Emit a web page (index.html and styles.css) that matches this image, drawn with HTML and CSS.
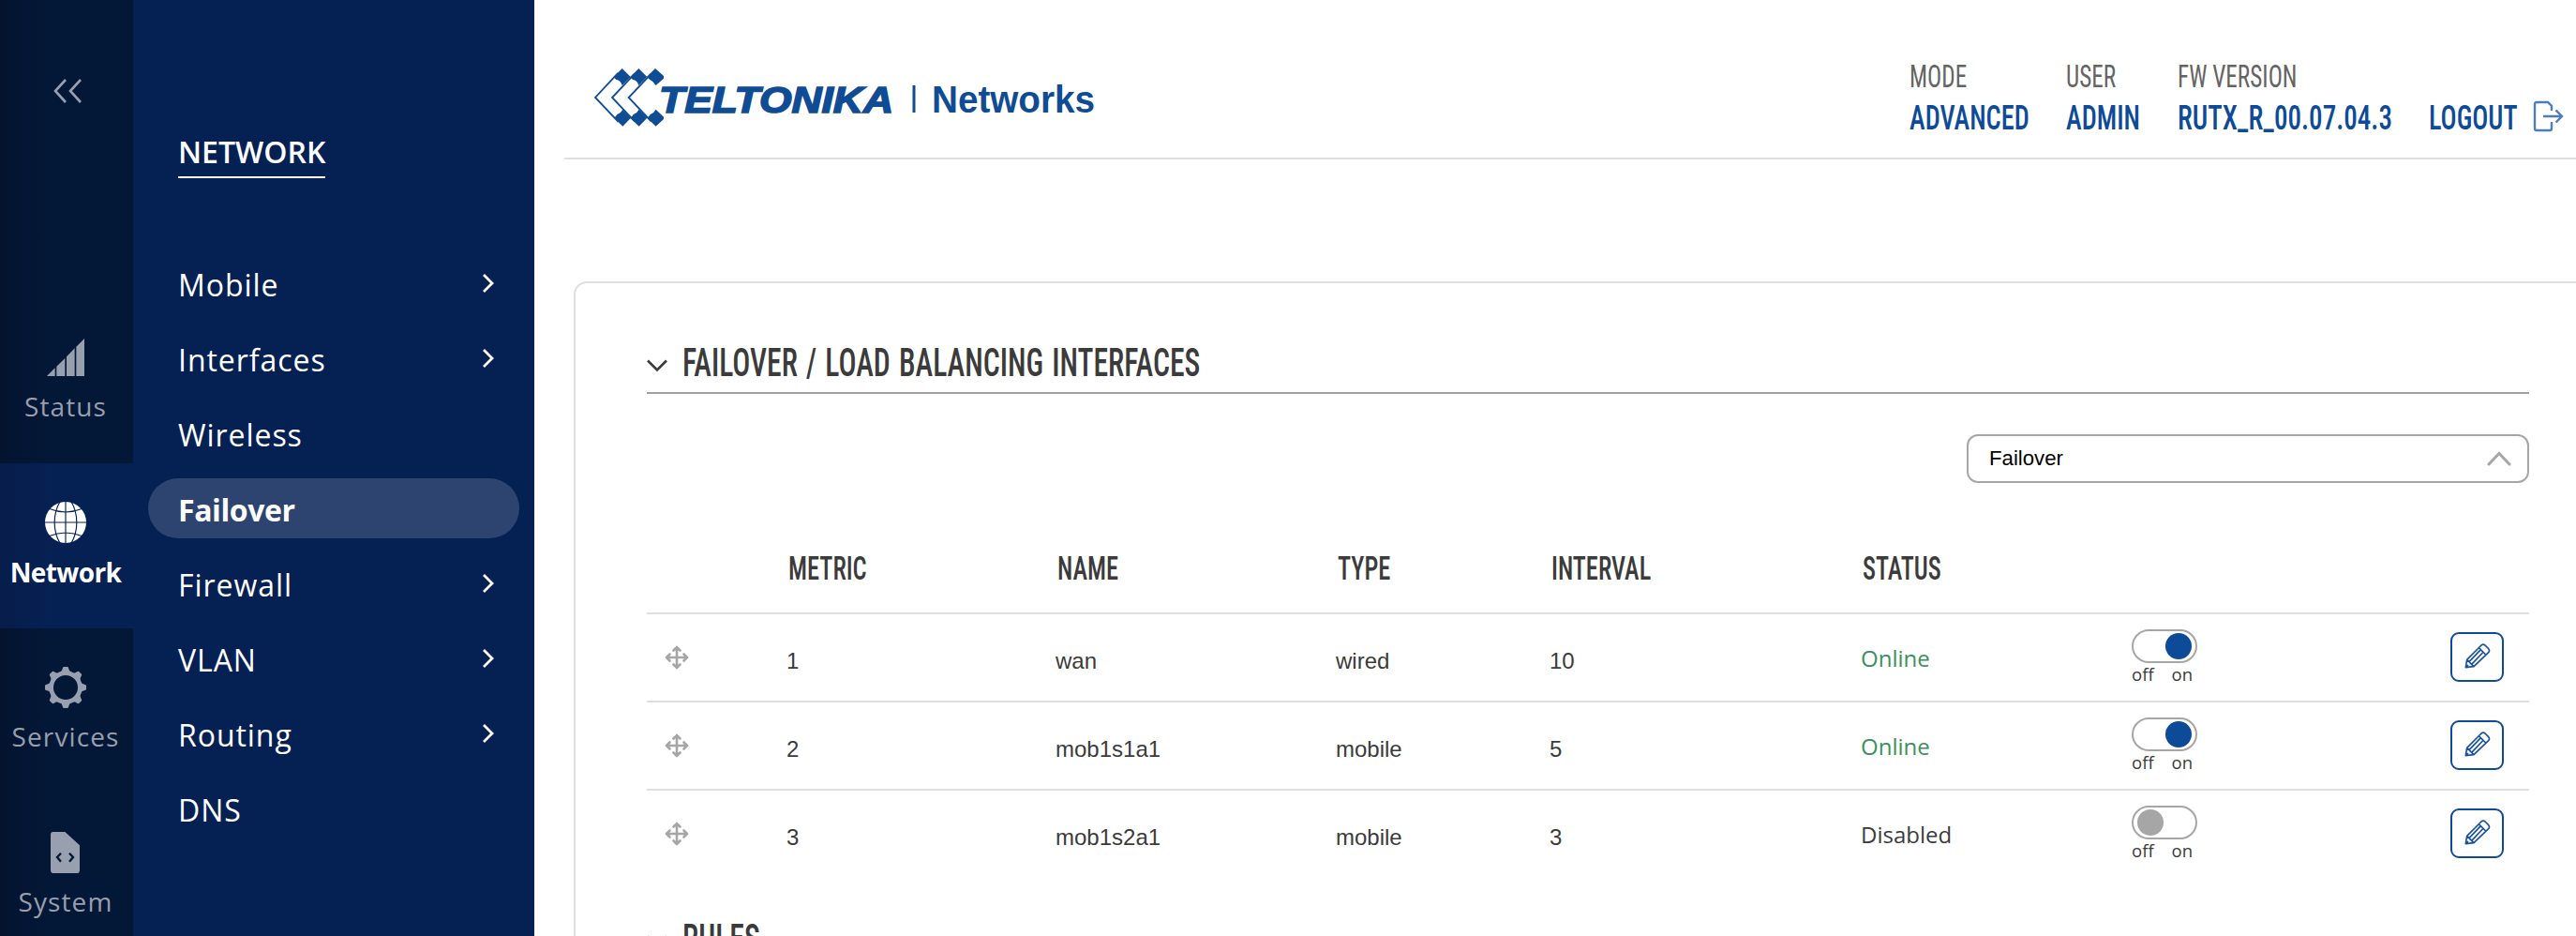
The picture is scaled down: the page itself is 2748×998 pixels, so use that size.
FILE: index.html
```html
<!DOCTYPE html>
<html lang="en">
<head>
    <meta charset="UTF-8">
    <meta name="viewport" content="width=device-width, initial-scale=1.0">
    <title>Failover - Teltonika Networks</title>
    <link rel="stylesheet" href="styles.css">
</head>
<body>
    <!-- shared icons -->
    <svg class="defs" width="0" height="0">
        <symbol id="chev-right" viewBox="0 0 14 22">
            <path d="M2 2l9 9-9 9" fill="none" stroke="#fff" stroke-width="2.8"/>
        </symbol>
        <symbol id="move" viewBox="0 0 26 26">
            <path d="M13 2v22M2 13h22M9.500 5.500L13 2l3.500 3.500M9.500 20.500l3.500 3.500 3.500-3.500M5.500 9.500L2 13l3.500 3.500M20.500 9.500l3.500 3.500-3.500 3.500" fill="none" stroke="#a6a6a6" stroke-width="2.600" stroke-linecap="round"/>
        </symbol>
        <symbol id="pencil" viewBox="0 0 84 84">
            <path d="M4 80L8 55 54 9q6-5 12 0l11 11q5 6 0 12L30 77zM8 55l22 22M15 62L53 22M23 70L61 30M46 17l22 22M4 80l8-8" fill="none" stroke="#1a529d" stroke-width="5" stroke-linejoin="round"/>
        </symbol>
    </svg>

    <div class="layout">
        <div class="rail">
            <div class="collapse">
                <svg width="32" height="28" viewBox="0 0 32 28"><path d="M14 2L3 14l11 12M30 2L19 14l11 12" fill="none" stroke="#989fae" stroke-width="2.600"/></svg>
            </div>
            <div class="rail_item">
                <svg width="44" height="44" viewBox="0 0 132 132"><path d="M6 126l26-26v26zM37 95l27-26v57H37zM69 64l26-27v89H69zM100 32l26-26v120h-26z" fill="#98a0b0"/></svg>
                <span>Status</span>
            </div>
            <div class="rail_item active">
                <svg width="44" height="44" viewBox="0 0 132 132">
                    <circle cx="66" cy="66" r="66" fill="#fff"/>
                    <path d="M66 0v132M0 66h132M50 -4C24 38 24 94 50 136M82 -4C108 38 108 94 82 136M12 22Q66 44 120 22M12 110Q66 88 120 110" fill="none" stroke="#052153" stroke-width="3.500"/>
                </svg>
                <span>Network</span>
            </div>
            <div class="rail_item">
                <svg width="44" height="44" viewBox="-66 -66 132 132">
                    <circle r="46" fill="none" stroke="#98a0b0" stroke-width="14"/>
                    <g fill="#98a0b0">
                        <path id="tooth" d="M-18-48Q-11-52-10-60q1-6 4-6H6q3 0 4 6 1 8 8 12z"/>
                        <use href="#tooth" transform="rotate(45)"/>
                        <use href="#tooth" transform="rotate(90)"/>
                        <use href="#tooth" transform="rotate(135)"/>
                        <use href="#tooth" transform="rotate(180)"/>
                        <use href="#tooth" transform="rotate(225)"/>
                        <use href="#tooth" transform="rotate(270)"/>
                        <use href="#tooth" transform="rotate(315)"/>
                    </g>
                </svg>
                <span>Services</span>
            </div>
            <div class="rail_item">
                <svg width="44" height="44" viewBox="0 0 132 132">
                    <path d="M26 0h38l47 43v79q0 10-10 10H28q-10 0-10-10V8q0-8 8-8z" fill="#98a0b0"/>
                    <path d="M51 68L39 81l12 14M78 68l12 13-12 14" fill="none" stroke="#031736" stroke-width="7"/>
                </svg>
                <span>System</span>
            </div>
        </div>

        <div class="menu">
            <div class="menu_title">NETWORK</div>
            <div class="menu_item"><span>Mobile</span><svg width="14" height="22"><use href="#chev-right"/></svg></div>
            <div class="menu_item"><span>Interfaces</span><svg width="14" height="22"><use href="#chev-right"/></svg></div>
            <div class="menu_item"><span>Wireless</span></div>
            <div class="menu_item selected"><span>Failover</span></div>
            <div class="menu_item"><span>Firewall</span><svg width="14" height="22"><use href="#chev-right"/></svg></div>
            <div class="menu_item"><span>VLAN</span><svg width="14" height="22"><use href="#chev-right"/></svg></div>
            <div class="menu_item"><span>Routing</span><svg width="14" height="22"><use href="#chev-right"/></svg></div>
            <div class="menu_item"><span>DNS</span></div>
        </div>

        <div class="main">
            <div class="header">
                <svg class="logo" width="560" height="80" viewBox="0 0 560 80" fill="#104c94">
                    <g transform="scale(.3333)">
                        <path d="M113 27l27 27-27 27q-4-16-20-19l-7-8zM166 27l27 27-27 27q-4-16-20-19l-7-8zM219 27l27 24v8l-25 22q-6-12-20-19l-9-8z"/>
                        <path d="M115 158l26 27-26 27-28-27q8-6 10-11 12-4 18-16zM167 158l26 27-26 27-28-27q8-6 10-11 12-4 18-16zM221 158l25 24v7l-25 23-28-27q8-6 10-11 12-4 18-16z"/>
                        <path d="M100 42L27 120l74 78M153 44L81 120l72 76M206 44L134 120l72 76" fill="none" stroke="#104c94" stroke-width="5.500"/>
                    </g>
                    <text class="brand" x="77" y="55.500" textLength="250" lengthAdjust="spacingAndGlyphs">TELTONIKA</text>
                    <rect x="347.500" y="27" width="3" height="29"/>
                    <text class="brand_sub" x="368" y="56" textLength="174" lengthAdjust="spacingAndGlyphs">Networks</text>
                </svg>
                <div class="stats">
                    <div class="stat"><label><span>MODE</span></label><b><span>ADVANCED</span></b></div>
                    <div class="stat"><label><span>USER</span></label><b><span>ADMIN</span></b></div>
                    <div class="stat"><label><span>FW VERSION</span></label><b><span class="fw">RUTX_R_00.07.04.3</span></b></div>
                    <div class="stat logout">
                        <b><span>LOGOUT</span></b>
                        <svg width="34" height="34" viewBox="0 0 34 34" fill="none" stroke="#4f7db6" stroke-width="2.400"><path d="M20 11V6l-4-4H4q-2 0-2 2v26q0 2 2 2h14q2 0 2-2v-7M11 17h20M24.500 10.500l6.500 6.500-6.500 6.500"/></svg>
                    </div>
                </div>
            </div>

            <div class="panel">
                <h2 class="section_title">
                    <svg width="22" height="14" viewBox="0 0 22 14"><path d="M1 1.500l10 10 10-10" fill="none" stroke="#3b3b3b" stroke-width="2.600"/></svg>
                    <span>FAILOVER / LOAD BALANCING INTERFACES</span>
                </h2>
                <div class="select">
                    <span>Failover</span>
                    <svg width="26" height="16" viewBox="0 0 26 16"><path d="M2 14L13 2.500 24 14" fill="none" stroke="#a6a6a6" stroke-width="3" stroke-linecap="round"/></svg>
                </div>

                <div class="row head">
                    <i></i>
                    <div><span>METRIC</span></div>
                    <div><span>NAME</span></div>
                    <div><span>TYPE</span></div>
                    <div><span>INTERVAL</span></div>
                    <div><span>STATUS</span></div>
                </div>
                <div class="row">
                    <svg class="move" width="26" height="26"><use href="#move"/></svg>
                    <div>1</div>
                    <div>wan</div>
                    <div>wired</div>
                    <div>10</div>
                    <div class="status online">Online</div>
                    <div class="switch on"><div class="track"><i></i></div><p><span>off</span><span>on</span></p></div>
                    <div class="edit"><svg width="28" height="28"><use href="#pencil"/></svg></div>
                </div>
                <div class="row">
                    <svg class="move" width="26" height="26"><use href="#move"/></svg>
                    <div>2</div>
                    <div>mob1s1a1</div>
                    <div>mobile</div>
                    <div>5</div>
                    <div class="status online">Online</div>
                    <div class="switch on"><div class="track"><i></i></div><p><span>off</span><span>on</span></p></div>
                    <div class="edit"><svg width="28" height="28"><use href="#pencil"/></svg></div>
                </div>
                <div class="row last">
                    <svg class="move" width="26" height="26"><use href="#move"/></svg>
                    <div>3</div>
                    <div>mob1s2a1</div>
                    <div>mobile</div>
                    <div>3</div>
                    <div class="status">Disabled</div>
                    <div class="switch"><div class="track"><i></i></div><p><span>off</span><span>on</span></p></div>
                    <div class="edit"><svg width="28" height="28"><use href="#pencil"/></svg></div>
                </div>

                <h2 class="section_title">
                    <svg width="22" height="14" viewBox="0 0 22 14"><path d="M1 1.500l10 10 10-10" fill="none" stroke="#3b3b3b" stroke-width="2.600"/></svg>
                    <span>RULES</span>
                </h2>
            </div>
        </div>
    </div>
</body>
</html>
```
FILE: styles.css
```css
* {
    box-sizing: border-box;
}
body {
    margin: 0;
    height: 998px;
    overflow: hidden;
    background: #fff;
    font-family: "Liberation Sans", Arial, sans-serif;
    color: #3b3b3b;
}
svg {
    display: block;
    flex: none;
}
.defs {
    position: absolute;
}
.layout {
    display: flex;
    height: 998px;
    overflow: hidden;
}

/* left icon rail */
.rail {
    flex: none;
    width: 142px;
    background: linear-gradient(to right, #04142f, #031736 50px);
    font-family: "Open Sans", sans-serif;
}
.collapse {
    height: 318px;
    padding: 83px 0 0 56px;
}
.rail_item {
    height: 176px;
    padding: 41px 2px 0 0;
    display: flex;
    flex-direction: column;
    align-items: center;
    font-size: 28px;
    line-height: 40px;
    letter-spacing: 1.1px;
    color: #989fae;
}
.rail_item span {
    margin-top: 10px;
}
.rail_item.active {
    background: linear-gradient(to right, #071d4b, #052153 60px);
    color: #fff;
    font-weight: 700;
    letter-spacing: -0.6px;
}
.rail_item.active span {
    margin-top: 11px;
}

/* navy sub menu */
.menu {
    flex: none;
    width: 428px;
    background: #052153;
    color: #fff;
    font-family: "Open Sans", sans-serif;
    font-size: 32px;
}
.menu_title {
    width: 157px;
    height: 60px;
    margin: 130px 0 72px 48px;
    border-bottom: 2px solid #fff;
    line-height: 64px;
    font-weight: 650;
}
.menu_item {
    display: flex;
    align-items: center;
    justify-content: space-between;
    height: 64px;
    margin: 8px 16px 16px;
    padding: 0 26px 0 32px;
    border-radius: 32px;
    letter-spacing: 0.95px;
}
.menu_title + .menu_item {
    margin-top: 80px;
}
.menu_item span {
    padding-top: 3px;
}
.menu_item.selected {
    background: #2d4470;
    font-weight: 700;
    letter-spacing: -0.4px;
}

/* top bar */
.main {
    flex: 1;
    min-width: 0;
}
.header {
    display: flex;
    justify-content: space-between;
    height: 170px;
    margin-left: 32px;
    border-bottom: 2px solid #dfdfdf;
}
.logo {
    margin: 64px 0 0 24px;
}
.brand {
    font-size: 39px;
    font-weight: bold;
    font-style: italic;
    stroke: #104c94;
    stroke-width: 1.6px;
}
.brand_sub {
    font-size: 40px;
    font-weight: bold;
}
.stats {
    display: grid;
    grid-template-columns: 167px 119px 268px 1fr;
    width: 711px;
    padding-top: 62px;
    font-family: Roboto, sans-serif;
    font-stretch: 75%;
    white-space: nowrap;
}
.stat label,
.stat b {
    display: block;
}
.stat label {
    font-size: 33px;
    line-height: 40px;
    font-weight: 450;
    color: #646464;
}
.stat b {
    font-size: 37px;
    line-height: 48px;
    font-weight: 480;
    color: #0d4b98;
}
.stat span,
.section_title span,
.head span {
    display: inline-block;
    transform: scaleX(0.765);
    transform-origin: left center;
}
.stat .fw {
    transform: scaleX(0.785);
}
.logout {
    display: flex;
    padding-top: 40px;
}
.logout b {
    width: 111px;
}
.logout svg {
    margin-top: 5px;
}

/* content */
.panel {
    height: 900px;
    margin: 130px 0 0 42px;
    padding: 61px 50px 0 76px;
    border: 2px solid #dfdfdf;
    border-right: 0;
    border-radius: 14px 0 0 0;
}
.section_title {
    display: flex;
    align-items: center;
    gap: 16px;
    height: 57px;
    margin: 0;
    padding-bottom: 7px;
    border-bottom: 2px solid #a0a0a0;
    font-family: Roboto, sans-serif;
    font-stretch: 75%;
    font-size: 42px;
    line-height: 48px;
    font-weight: 470;
    word-spacing: 2.5px;
    white-space: nowrap;
}
.section_title span {
    transform: scaleX(0.754);
}
.section_title svg {
    margin-top: 5px;
}
.select {
    display: flex;
    align-items: center;
    justify-content: space-between;
    width: 600px;
    height: 52px;
    margin: 43px 0 0 auto;
    padding: 0 17px 0 22px;
    border: 2px solid #a6a6a6;
    border-radius: 12px;
    font-size: 22.2px;
    color: #000;
}
.row {
    display: grid;
    grid-template-columns: 149px 287px 299px 228px 332px 289px 340px 1fr;
    height: 94px;
    border-bottom: 2px solid #dfdfdf;
    font-size: 24px;
    line-height: 92px;
}
.row > div {
    padding-top: 4px;
}
.row.last {
    border-bottom-color: transparent;
    margin-bottom: 40px;
}
.row.head {
    height: 140px;
    padding-top: 67px;
    font-family: Roboto, sans-serif;
    font-stretch: 75%;
    font-size: 35px;
    font-weight: 480;
    line-height: 50px;
}
.row.head > div {
    padding: 0 0 0 2px;
}
.row.head span {
    transform: scaleX(0.755);
}
.move {
    margin: 33px 0 0 19px;
}
.row > .status {
    padding-top: 1px;
    font-family: "Open Sans", sans-serif;
}
.online {
    color: #3e8f5f;
}
.row > .switch {
    width: 70px;
    padding-top: 16px;
    font-family: "Open Sans", sans-serif;
    font-size: 18.5px;
    line-height: 24px;
}
.track {
    height: 36px;
    padding: 2px 4px;
    border: 2px solid #a6a6a6;
    border-radius: 18px;
}
.track i {
    display: block;
    width: 28px;
    height: 28px;
    border-radius: 50%;
    background: #a6a6a6;
}
.switch.on .track i {
    margin-left: 30px;
    background: #0d4b98;
}
.switch p {
    display: flex;
    justify-content: space-between;
    margin: 0;
    padding-right: 5px;
}
.row > .edit {
    display: flex;
    align-items: center;
    justify-content: center;
    width: 57px;
    height: 53px;
    margin-top: 19px;
    padding: 0 0 4px;
    border: 2px solid #0d4b98;
    border-radius: 9px;
}
```
